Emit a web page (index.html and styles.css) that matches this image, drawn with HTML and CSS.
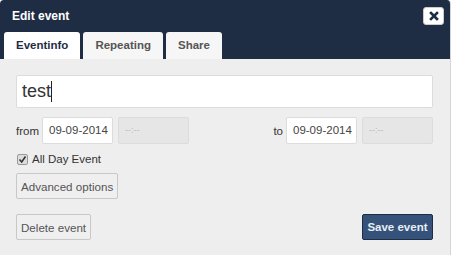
FILE: index.html
```html
<!DOCTYPE html>
<html>
<head>
<meta charset="utf-8">
<link rel="stylesheet" href="styles.css">
</head>
<body>
<div class="dialog">
  <div class="header">
    <div class="titlebar">
      <span class="title">Edit event</span>
      <button class="close" aria-label="close"><svg width="10" height="10" viewBox="0 0 10 10"><path d="M2 2 L8 8 M8 2 L2 8" stroke="#1e2d44" stroke-width="2.6" stroke-linecap="square"/></svg></button>
    </div>
    <div class="tabs">
      <div class="tab active">Eventinfo</div>
      <div class="tab">Repeating</div>
      <div class="tab">Share</div>
    </div>
  </div>
  <div class="content">
    <div class="titleinput">test<span class="caret"></span></div>
    <div class="daterow">
      <div class="group">
        <span class="lbl">from</span>
        <div class="field">09-09-2014</div>
        <div class="field disabled">--:--</div>
      </div>
      <div class="group">
        <span class="lbl">to</span>
        <div class="field">09-09-2014</div>
        <div class="field disabled">--:--</div>
      </div>
    </div>
    <label class="allday"><span class="check"><svg width="9" height="9" viewBox="0 0 9 9"><path d="M1.5 4.5 L3.7 7 L7.5 1.5" stroke="#333" stroke-width="1.6" fill="none"/></svg></span>All Day Event</label>
    <div class="advrow"><button class="btn">Advanced options</button></div>
    <div class="actions">
      <button class="btn">Delete event</button>
      <button class="btn primary">Save event</button>
    </div>
  </div>
</div>
</body>
</html>
```
FILE: styles.css
```css
html, body {
  margin: 0;
  padding: 0;
  background: #ffffff;
}
body {
  font-family: "Liberation Sans", Arial, sans-serif;
  font-size: 11px;
  color: #333;
}
.dialog {
  width: 450px;
  height: 255px;
  background: #eeeeee;
  border-right: 1px solid #d4d4d4;
  border-radius: 4px 4px 0 0;
  overflow: hidden;
}
.header {
  background: #1e2d44;
  height: 59px;
  display: flex;
  flex-direction: column;
  justify-content: space-between;
}
.titlebar {
  display: flex;
  justify-content: space-between;
  align-items: center;
  padding: 7px 6px 0 12px;
}
.title {
  color: #fff;
  font-weight: bold;
  font-size: 12px;
}
.close {
  width: 21px;
  height: 18px;
  background: #fff;
  border: 1px solid #ccc;
  border-radius: 3px;
  padding: 0;
  display: flex;
  align-items: center;
  justify-content: center;
}
.tabs {
  display: flex;
  gap: 3px;
  padding-left: 4px;
}
.tab {
  height: 27px;
  box-sizing: border-box;
  padding: 0 12px;
  line-height: 27px;
  background: #f6f6f6;
  color: #555;
  font-weight: bold;
  font-size: 11.5px;
  border-radius: 3px 3px 0 0;
}
.tab.active {
  background: #fff;
  color: #1e2d44;
}
.content {
  padding: 16px 17px 0 16px;
}
.titleinput {
  height: 33px;
  box-sizing: border-box;
  background: #fff;
  border: 1px solid #dcdcdc;
  border-radius: 2px;
  font-size: 18px;
  color: #333;
  padding-left: 5px;
  line-height: 31px;
  display: flex;
  align-items: center;
}
.caret {
  display: inline-block;
  width: 1px;
  height: 21px;
  background: #222;
}
.daterow {
  display: flex;
  justify-content: space-between;
  margin-top: 9px;
}
.group {
  display: flex;
  align-items: center;
  gap: 5px;
}
.lbl {
  color: #333;
  font-size: 11.5px;
  margin-right: -2px;
}
.field {
  width: 71px;
  height: 27px;
  box-sizing: border-box;
  background: #fff;
  border: 1px solid #dcdcdc;
  border-radius: 2px;
  padding-left: 6px;
  line-height: 25px;
  color: #444;
  font-size: 11.5px;
}
.field.disabled {
  background: #e6e6e6;
  color: #bbb;
  font-size: 9px;
}
.allday {
  display: flex;
  align-items: center;
  margin-top: 8px;
  margin-left: 1px;
  height: 14px;
  color: #333;
  font-size: 11.5px;
}
.check {
  width: 9px;
  height: 9px;
  border: 1px solid #999;
  border-radius: 2px;
  background: #ddd;
  margin-right: 4px;
  display: flex;
}
.check svg { display: block; }
.advrow {
  margin-top: 7px;
}
.btn {
  font-family: "Liberation Sans", Arial, sans-serif;
  font-size: 11.6px;
  height: 26px;
  padding: 0 4px;
  background: #efefef;
  border: 1px solid #c8c8c8;
  border-radius: 2px;
  color: #555;
}
.actions {
  display: flex;
  justify-content: space-between;
  margin-top: 15px;
}
.btn.primary {
  background: #34527a;
  border-color: #1e2d44;
  color: #e8edf4;
  font-weight: bold;
  font-size: 11.5px;
  padding: 0 4.5px;
}
```
